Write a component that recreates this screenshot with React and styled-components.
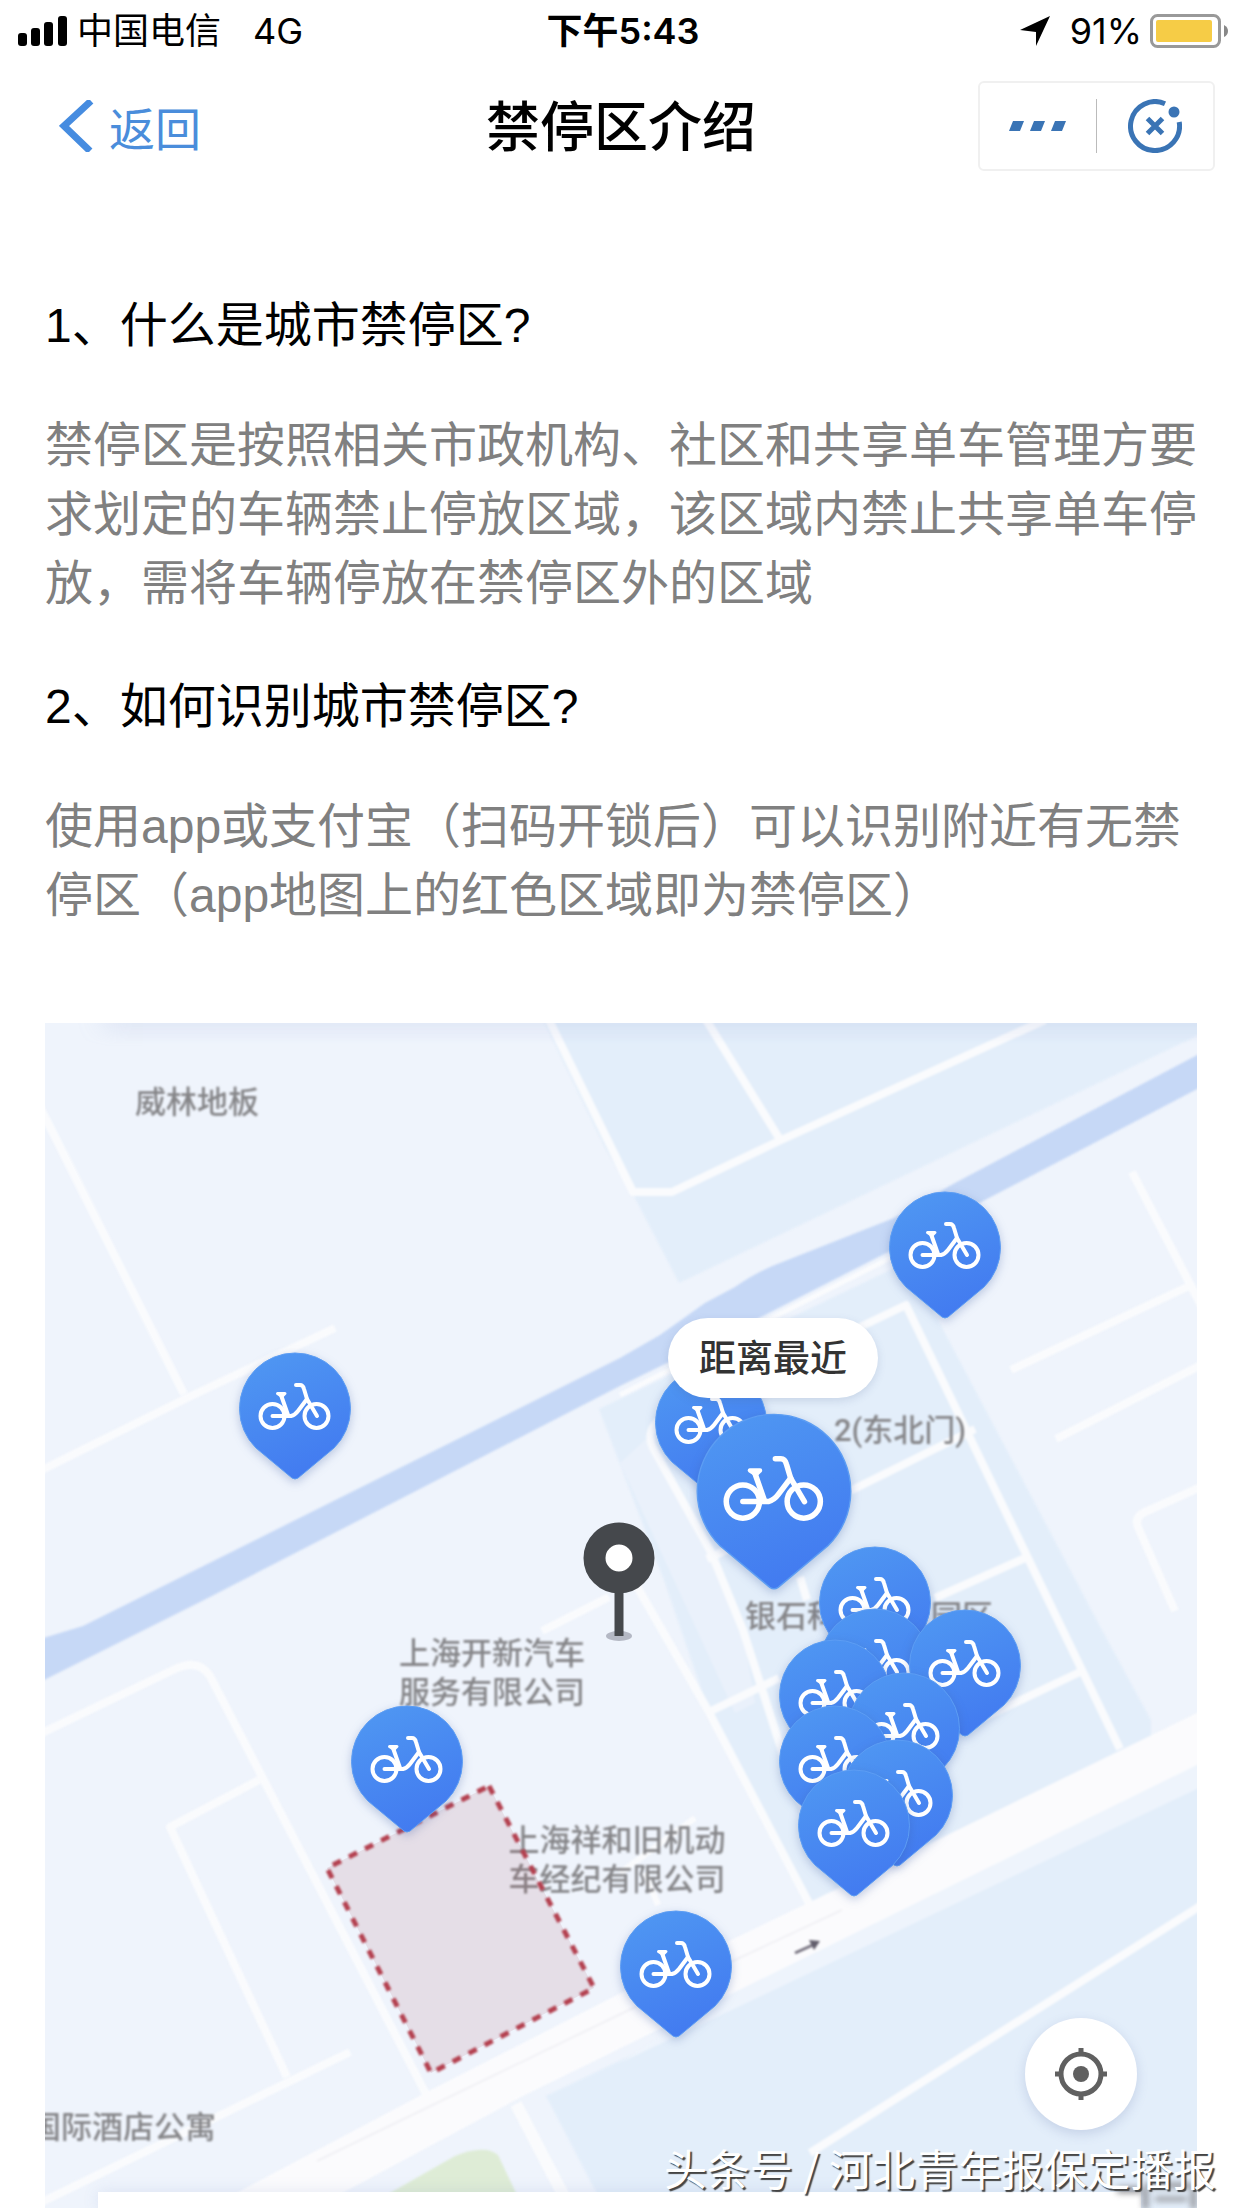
import React from "react";
import styled, { createGlobalStyle } from "styled-components";

const GlobalStyle = createGlobalStyle`
  * {
    box-sizing: border-box;
  }

  body {
    margin: 0;
    background: #fff;
    color: #000;
    font-family: "Liberation Sans", "Noto Sans CJK SC", sans-serif;
  }

  button {
    padding: 0;
    border: 0;
    background: none;
    font: inherit;
    color: inherit;
    cursor: pointer;
  }
`;

const Page = styled.div`
  position: relative;
  overflow: hidden;
`;

const StatusBar = styled.div`
  display: grid;
  grid-template-columns: 1fr auto 1fr;
  align-items: center;
  height: 62px;
  padding: 0 14px 0 18px;
  font-family: Inter, "Noto Sans CJK SC", sans-serif;
  font-size: 36px;
  line-height: 62px;

  svg {
    display: block;
    flex: none;
  }
`;

const StatusGroup = styled.div`
  display: flex;
  align-items: center;
  justify-content: ${(props) => (props.$end ? "flex-end" : "flex-start")};
  gap: ${(props) => props.$gap}px;
`;

const Clock = styled.div`
  font-weight: 600;
`;

const NavBar = styled.header`
  display: grid;
  grid-template-columns: 1fr auto 1fr;
  align-items: center;
  height: 128px;
  padding: 0 27px;
  font-family: "Noto Sans CJK SC", sans-serif;
`;

const BackLink = styled.a`
  display: flex;
  align-items: center;
  justify-self: start;
  gap: 14px;
  padding-left: 32px;
  color: #4a8ddb;
  font-size: 46px;
  line-height: 60px;
  text-decoration: none;
`;

const Title = styled.h1`
  margin: 0;
  padding-bottom: 4px;
  font-size: 54px;
  font-weight: 500;
  line-height: 72px;
`;

const Capsule = styled.div`
  display: flex;
  align-items: center;
  justify-self: end;
  width: 237px;
  height: 90px;
  border: 2px solid #f0f0f0;
  border-radius: 6px;
`;

const CapsuleButton = styled.button`
  display: flex;
  flex: 1;
  align-items: center;
  justify-content: center;
  height: 54px;

  & + & {
    border-left: 1px solid #bbb;
  }
`;

const Article = styled.main`
  padding: 101px 45px 0;
`;

const Section = styled.section`
  & + & {
    margin-top: 54px;
  }
`;

const Question = styled.h2`
  margin: 0 0 51px;
  font-size: 48px;
  font-weight: 400;
  line-height: 69px;
`;

const Answer = styled.p`
  margin: 0;
  color: #808080;
  font-size: 48px;
  line-height: 69px;
`;

const MapView = styled.div`
  position: relative;
  aspect-ratio: 1152 / 1185;
  margin-top: 93px;
  overflow: hidden;
  background: #eff4fc;
`;

const MapLayer = styled.svg`
  position: absolute;
  inset: 0;
  width: 100%;
  height: 100%;
`;

// 地图坐标以 1152 宽为基准，换算成百分比
const Marker = styled.div`
  position: absolute;
  left: ${(props) => (props.$x / 1152) * 100}%;
  top: ${(props) => (props.$y / 1185) * 100}%;
  transform: translateX(-50%);
`;

const PlaceLabel = styled(Marker)`
  color: #858588;
  font-family: Roboto, "Noto Sans CJK SC", sans-serif;
  font-size: 31px;
  font-weight: 500;
  line-height: 39px;
  white-space: pre;
  filter: blur(1px);
`;

const Pin = styled(Marker)`
  width: ${(props) => (props.$large ? 155 : 112)}px;
  filter: drop-shadow(0 3px 5px rgba(60, 90, 160, 0.3));

  svg {
    display: block;
    width: 100%;
    overflow: visible;
  }
`;

const NearestBadge = styled(Marker)`
  padding: 0 31px 4px;
  border-radius: 40px;
  background: #fff;
  box-shadow: 0 3px 8px rgba(80, 100, 150, 0.18);
  color: #333;
  font-family: "Noto Sans CJK SC", sans-serif;
  font-size: 37px;
  font-weight: 500;
  line-height: 76px;
  white-space: nowrap;
`;

const LocateButton = styled.button`
  position: absolute;
  right: 60px;
  top: 84%;
  display: flex;
  align-items: center;
  justify-content: center;
  width: 112px;
  height: 112px;
  border-radius: 50%;
  background: #fff;
  box-shadow: 0 4px 12px rgba(90, 110, 170, 0.22);
`;

const BottomCard = styled.div`
  position: absolute;
  right: 56px;
  bottom: 0;
  left: 53px;
  height: 16px;
  background: #fff;
  box-shadow: 0 0 16px rgba(100, 120, 180, 0.15);
`;

const Credit = styled.div`
  position: absolute;
  right: 26px;
  bottom: 10px;
  color: #fff;
  font-family: "Noto Sans CJK SC", sans-serif;
  font-size: 43px;
  line-height: 62px;
  text-shadow: 2px 2px 1px #444;
  white-space: nowrap;
`;

const pins = [
  { x: 250, y: 329 },
  { x: 900, y: 168 },
  { x: 666, y: 343 },
  { x: 729, y: 390, large: true },
  { x: 830, y: 523 },
  { x: 830, y: 585 },
  { x: 920, y: 586 },
  { x: 790, y: 616 },
  { x: 859, y: 649 },
  { x: 790, y: 682 },
  { x: 852, y: 716 },
  { x: 809, y: 746 },
  { x: 362, y: 682 },
  { x: 631, y: 887 },
];

const labels = [
  { x: 152, y: 60, text: "威林地板" },
  { x: 855, y: 388, text: "2(东北门)" },
  { x: 824, y: 574, text: "银石科技产业园区" },
  { x: 447, y: 611, text: "上海开新汽车\n服务有限公司" },
  { x: 572, y: 798, text: "上海祥和旧机动\n车经纪有限公司" },
  { x: 78, y: 1085, text: "国际酒店公寓" },
];

const SignalIcon = () => (
  <svg width="49" height="30" viewBox="0 0 49 30">
    <rect x="0" y="17" width="9" height="13" rx="3" />
    <rect x="13" y="12" width="9" height="18" rx="3" />
    <rect x="26" y="6" width="9" height="24" rx="3" />
    <rect x="40" y="0" width="9" height="30" rx="3" />
  </svg>
);

const BatteryIcon = () => (
  <svg width="78" height="34" viewBox="0 0 78 34">
    <rect x="1.5" y="1.5" width="68" height="31" rx="6" fill="none" stroke="#999" strokeWidth="3" />
    <rect x="6" y="6" width="56" height="22" rx="2" fill="#f6cc46" />
    <path d="M74 11q4 2 4 6t-4 6z" fill="#888" />
  </svg>
);

const BikePin = () => (
  <svg viewBox="0 0 112 130">
    <defs>
      <linearGradient id="pinFill" x1="0.2" y1="0" x2="0.6" y2="1">
        <stop offset="0" stopColor="#4f97f2" />
        <stop offset="1" stopColor="#427af0" />
      </linearGradient>
    </defs>
    <path
      d="M17 96A55.5 55.5 0 1 1 95 96L59 126Q56 128 53 126Z"
      fill="url(#pinFill)"
      stroke="#5c9df3"
      strokeWidth="1"
    />
    <g fill="none" stroke="#fff" strokeWidth="4" strokeLinecap="round" strokeLinejoin="round">
      <circle cx="33.5" cy="64" r="12" />
      <circle cx="77.5" cy="64" r="12" />
      <path d="M33.5 64H52Q56 63 59 59L68 47" />
      <path d="M42 43L49 63" />
      <path d="M38.5 41.5H46L43 44.5Z" strokeWidth="3" />
      <path d="M57 33H61Q64 33 65 37L68 47L78 64" />
    </g>
  </svg>
);

const StreetMap = () => (
  <MapLayer viewBox="0 0 1152 1185" preserveAspectRatio="xMidYMid slice">
    <defs>
      <linearGradient id="topShade" x1="0" y1="0" x2="0" y2="1">
        <stop offset="0" stopColor="#7f92c8" stopOpacity="0.13" />
        <stop offset="1" stopColor="#7f92c8" stopOpacity="0" />
      </linearGradient>
      <filter id="soft" colorInterpolationFilters="sRGB">
        <feGaussianBlur stdDeviation="1.2" />
      </filter>
      <filter id="softer" colorInterpolationFilters="sRGB">
        <feGaussianBlur stdDeviation="14 2" />
      </filter>
    </defs>
    <g filter="url(#soft)">
      {/* 街区 */}
      <g fill="#e3eefa">
        <path d="M497 -5L560 125L591 177L634 260L1160 9V-5Z" />
        <path d="M554 386L860 240L892 295L1057 607L1106 697L1106 715L765 882L664 689L620 560Z" />
        <path d="M501 1073L1160 759V1190H562Z" />
      </g>
      <path d="M603 414L575 440L690 690L710 680L698 607L666 529Z" fill="#eaf1fb" />
      <path d="M345 1170L410 1133Q440 1121 453 1132L471 1170V1190H330Z" fill="#deecd6" />

      {/* 河道 */}
      <path
        d="M-5 616L38 603L575 335L615 312L660 280L690 264Q712 248 740 238L849 195L908 161L1160 28V62L940 177L853 224L710 297L575 363L159 577L-5 659Z"
        fill="#c6d8f6"
      />

      {/* 小路 */}
      <g fill="none" stroke="#fafbfd" strokeWidth="8" strokeLinejoin="round">
        <path d="M503 -5L588 169H627L734 118L1000 -3" />
        <path d="M660 -5L734 115" />
        <path d="M-5 84L139 371" />
        <path d="M-5 448L144 374L290 305" />
        <path d="M-5 711L130 646Q153 635 165 653L382 1073" />
        <path d="M214 757L125 804L242 1054" />
        <path d="M305 1029L-5 1180" />
        <path d="M497 608L564 574" />
        <path d="M590 560L664 689L765 882" />
        <path d="M575 372L853 231" strokeWidth="5" />
        <path d="M740 340L861 282L1075 726" />
        <path d="M640 384Q596 398 608 425L666 529L698 607L742 744L765 800" />
        <path d="M662 536L690 523" />
        <path d="M755 554L762 577" />
        <path d="M666 688L734 655" />
        <path d="M805 468L930 406" />
        <path d="M890 575L980 535" />
        <path d="M940 694L1035 649" />
        <path d="M1087 149L1160 290" />
        <path d="M966 347L1142 264" />
        <path d="M1011 416L1160 340" />
        <path d="M1160 462L1100 489Q1089 494 1093 504L1130 588" />
        <path d="M471 1081L525 1185" strokeWidth="12" />
        <path d="M575 850L650 795" strokeWidth="6" />
        <path d="M600 850L613 882" strokeWidth="6" />
        <path d="M765 1130L1160 880" />
      </g>

      {/* 主干道 */}
      <path d="M686 969L1160 736V762L575 1040Z" fill="#eef4fc" />
      <path d="M150 1192L382 1069L572 972L765 879L1160 686V738L686 971L480 1072L260 1190Z" fill="#fbfbfd" />
      <path d="M272 1138L615 972L797 887" fill="none" stroke="#f1f1f5" strokeWidth="2" />
      <path d="M750 930L770 921" stroke="#777380" strokeWidth="3" />
      <path d="M764 917L775 918L769 927Z" fill="#625e6c" />
    </g>
    <rect x="60" y="-4" width="1140" height="26" fill="url(#topShade)" filter="url(#softer)" />
  </MapLayer>
);

const MapOverlay = () => (
  <MapLayer viewBox="0 0 1152 1185" preserveAspectRatio="xMidYMid slice">
    <path d="M444 763L549 965L386 1050L282 845Z" fill="#a85a68" fillOpacity="0.14" />
    <path
      d="M444 763L549 965L386 1050L282 845Z"
      fill="none"
      stroke="#b3404f"
      strokeWidth="5"
      strokeDasharray="9 9"
      strokeLinejoin="round"
      style={{ filter: "blur(1px)" }}
    />
    <ellipse cx="574" cy="613" rx="13" ry="5" fill="#b4b8c4" />
    <path d="M574 560V613" stroke="#45484c" strokeWidth="9" />
    <circle cx="574" cy="535" r="24.5" fill="#fff" stroke="#45484c" strokeWidth="22" />
  </MapLayer>
);

const App = () => {
  return (
    <Page>
      <GlobalStyle />
      <StatusBar>
        <StatusGroup $gap={32}>
          <StatusGroup $gap={10}>
            <SignalIcon />
            <span>中国电信</span>
          </StatusGroup>
          <span>4G</span>
        </StatusGroup>
        <Clock>下午5:43</Clock>
        <StatusGroup $gap={8} $end>
          <StatusGroup $gap={20}>
            <svg width="30" height="30" viewBox="0 0 30 30">
              <path d="M30 0L16 30V16L0 14Z" />
            </svg>
            <span>91%</span>
          </StatusGroup>
          <BatteryIcon />
        </StatusGroup>
      </StatusBar>

      <NavBar>
        <BackLink href="#back">
          <svg width="36" height="52" viewBox="0 0 36 52">
            <path d="M32 1L5 26L31 51" fill="none" stroke="#468ce0" strokeWidth="7" />
          </svg>
          返回
        </BackLink>
        <Title>禁停区介绍</Title>
        <Capsule>
          <CapsuleButton aria-label="更多">
            <svg width="58" height="10" viewBox="0 0 58 10" fill="#3a74b5">
              <path d="M4 0H15L11 10H0Z" />
              <path d="M25 0H36L32 10H21Z" />
              <path d="M46 0H57L53 10H42Z" />
            </svg>
          </CapsuleButton>
          <CapsuleButton aria-label="关闭">
            <svg width="54" height="54" viewBox="-27 -27 54 54" fill="none" stroke="#3a74b5" strokeWidth="5">
              <path d="M10 -22.3A24.5 24.5 0 1 0 24.2 -4" />
              <path d="M-7.5 -7.5L7.5 7.5M7.5 -7.5L-7.5 7.5" />
              <circle cx="19" cy="-14" r="5.5" fill="#3a74b5" stroke="none" />
            </svg>
          </CapsuleButton>
        </Capsule>
      </NavBar>

      <Article>
        <Section>
          <Question>1、什么是城市禁停区?</Question>
          <Answer>
            禁停区是按照相关市政机构、社区和共享单车管理方要求划定的车辆禁止停放区域，该区域内禁止共享单车停放，需将车辆停放在禁停区外的区域
          </Answer>
        </Section>
        <Section>
          <Question>2、如何识别城市禁停区?</Question>
          <Answer>
            使用app或支付宝（扫码开锁后）可以识别附近有无禁停区（app地图上的红色区域即为禁停区）
          </Answer>
        </Section>

        <MapView>
          <StreetMap />
          {labels.map((label) => (
            <PlaceLabel key={label.text} $x={label.x} $y={label.y}>
              {label.text}
            </PlaceLabel>
          ))}
          <MapOverlay />
          {pins.map((pin) => (
            <Pin key={`${pin.x}-${pin.y}`} $x={pin.x} $y={pin.y} $large={pin.large}>
              <BikePin />
            </Pin>
          ))}
          <NearestBadge $x={728} $y={295}>
            距离最近
          </NearestBadge>
          <LocateButton aria-label="定位">
            <svg width="54" height="54" viewBox="-27 -27 54 54" fill="none" stroke="#606060" strokeWidth="5">
              <circle r="20" />
              <circle r="8" fill="#606060" stroke="none" />
              <path d="M0 -26V-20M0 20V26M-26 0H-20M20 0H26" />
            </svg>
          </LocateButton>
          <BottomCard />
          <MapLayer viewBox="0 0 1152 1185" pointerEvents="none">
            <g fill="#8a8a8e" style={{ filter: "blur(3px)" }}>
              <rect x="1072" y="1164" width="24" height="6" />
              <rect x="1100" y="1160" width="48" height="5" />
              <rect x="1098" y="1166" width="5" height="20" />
              <rect x="1110" y="1174" width="32" height="4" />
              <rect x="1146" y="1166" width="5" height="20" />
            </g>
          </MapLayer>
        </MapView>
      </Article>

      <Credit>头条号 / 河北青年报保定播报</Credit>
    </Page>
  );
};

export default App;
